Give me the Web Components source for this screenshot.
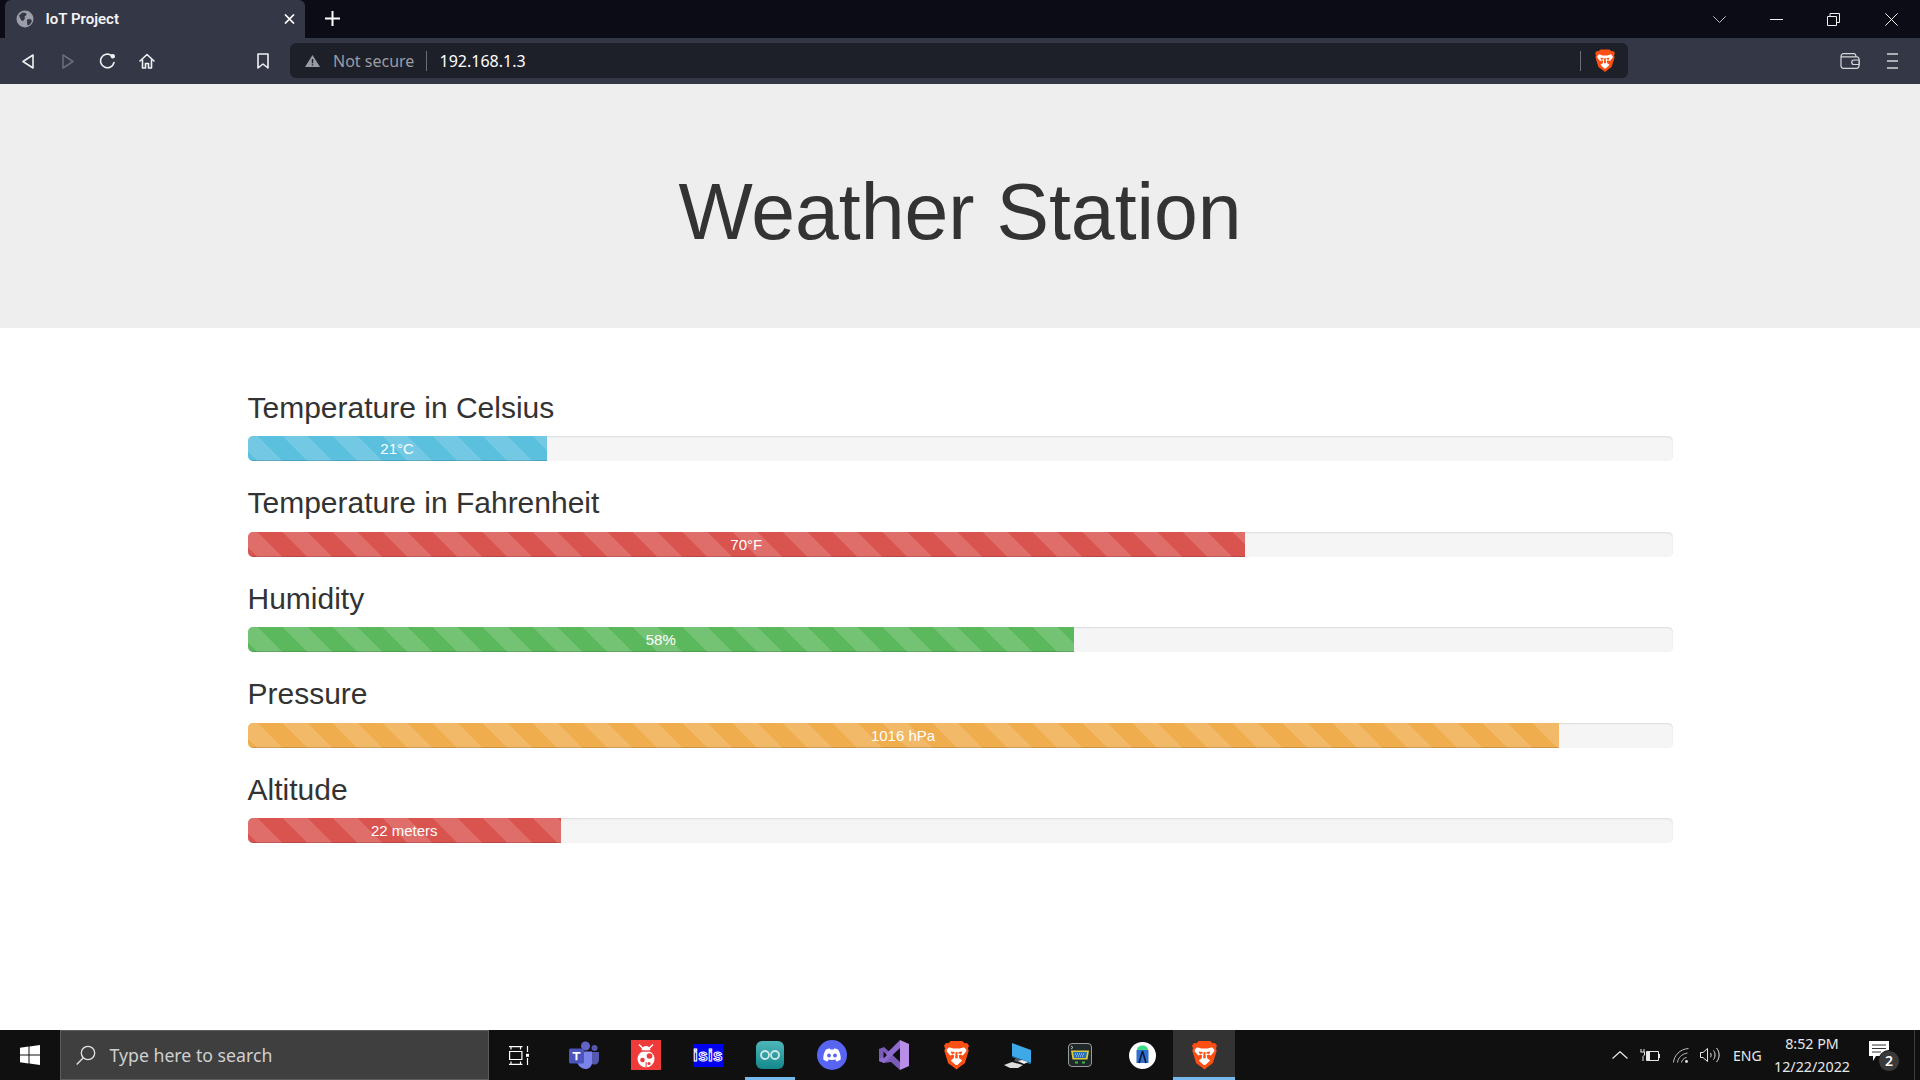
<!DOCTYPE html>
<html><head><meta charset="utf-8"><title>IoT Project</title>
<style>
html,body{margin:0;padding:0;height:100%;overflow:hidden;background:#fff}
body{font-family:"Liberation Sans",Arial,sans-serif}
</style></head><body>
<desktop-shell>
  <browser-tabs slot="tabs"></browser-tabs>
  <browser-toolbar slot="toolbar"></browser-toolbar>
  <weather-page slot="page">
    <weather-meter label="Temperature in Celsius" value="21°C" pct="21" color="#5bc0de"></weather-meter>
    <weather-meter label="Temperature in Fahrenheit" value="70°F" pct="70" color="#d9534f"></weather-meter>
    <weather-meter label="Humidity" value="58%" pct="58" color="#5cb85c"></weather-meter>
    <weather-meter label="Pressure" value="1016 hPa" pct="92" color="#f0ad4e"></weather-meter>
    <weather-meter label="Altitude" value="22 meters" pct="22" color="#d9534f"></weather-meter>
  </weather-page>
  <win-taskbar slot="taskbar"></win-taskbar>
</desktop-shell>
<script>
const LION=(w,h)=>`<svg width="${w}" height="${h}" viewBox="0 0 24 28"><path fill="#fb4f14" d="M6.500 .5h11l2.300 2.300 2.200-.4 2 2.600-1 2.500.7 2.500-3.700 12-5 3.500L12 28l-3-2.500-5-3.500L.3 10 1 7.500 0 5l2-2.600 2.200.4z"/><path fill="#fff" d="M4.800 6.500L9 7.800h6l4.200-1.300 2.300 2.400-.2 1.800-3.300 3.800-2.500-.9-1.300.9.500 2.700 2.800 2-1.800 1.800-2.900 2.700h-1.600l-2.900-2.700-1.800-1.800 2.800-2 .5-2.700-1.300-.9-2.500.9-3.300-3.800-.2-1.800z"/><path fill="#fb4f14" d="M6.300 10.600l3.700.5.300 1.500-2.900.5zM17.700 10.600l-3.700.5-.3 1.500 2.900.5zM11.200 11h1.600l.5 6.200h-2.600z"/></svg>`;
const def=(name,html)=>customElements.define(name,class extends HTMLElement{
  constructor(){super();this.attachShadow({mode:'open'}).innerHTML=typeof html==='function'?html(this):html;}
});

def('desktop-shell',`<style>
:host{display:flex;flex-direction:column;height:1080px;width:1920px;overflow:hidden}
.page{flex:1;min-height:0;overflow:hidden}
</style><slot name="tabs"></slot><slot name="toolbar"></slot><div class="page"><slot name="page"></slot></div><slot name="taskbar"></slot>`);

def('browser-tabs',`<style>
:host{display:flex;height:38px;background:#0b0c15;color:#fff;flex:none}
.tab{width:300px;margin-left:5px;background:#343746;border-radius:6px 6px 0 0;display:flex;align-items:center;box-sizing:border-box;padding-left:10.500px;position:relative}
.globe{margin-right:12px;display:block}
.t{font:600 15px "Roboto","Noto Sans",sans-serif;color:#f2f3f5}
.x{position:absolute;left:279px;top:14px}
.plus{margin-left:20px;margin-top:11px;display:block}
.right{margin-left:auto;display:flex;align-items:center;margin-right:22px}
.right svg{display:block}
</style>
<div class="tab">
<svg class="globe" width="18" height="18" viewBox="0 0 18 18"><circle cx="9" cy="9" r="8.500" fill="#9b9ea8"/><path fill="#343746" d="M3 5.500l3.500-3 3.500.5.500 2-2 1.500.5 2-2 2.500-1.500-.5-1.500-2.500zM11 9.500l3.500-.5 1.500 2-2 3.500-2.500 1L11 12z"/></svg>
<span class="t">IoT Project</span>
<svg class="x" width="11" height="10" viewBox="0 0 11 10"><path d="M1 .5l9 9M10 .5l-9 9" stroke="#fff" stroke-width="1.700" fill="none"/></svg>
</div>
<svg class="plus" width="15" height="15" viewBox="0 0 15 15"><path d="M7.500 0v15M0 7.500h15" stroke="#fff" stroke-width="2" fill="none"/></svg>
<div class="right">
<svg width="13" height="7" viewBox="0 0 13 7"><path d="M.3.300l6.200 6.200L12.700.300" stroke="#b9bac0" fill="none"/></svg>
<svg style="margin-left:44px" width="13" height="3" viewBox="0 0 13 3"><path d="M0 1.500h13" stroke="#eee" fill="none"/></svg>
<svg style="margin-left:44px" width="13" height="13" viewBox="0 0 13 13"><path d="M.5 3.500h9v9h-9zM3 3.500V.5h9.500v9H9.500" stroke="#eee" fill="none"/></svg>
<svg style="margin-left:45px" width="13" height="13" viewBox="0 0 13 13"><path d="M.3.300l12.400 12.400M12.700.300L.3 12.700" stroke="#eee" fill="none"/></svg>
</div>`);

def('browser-toolbar',()=>`<style>
:host{display:flex;align-items:center;height:46px;background:#343746;flex:none;color:#fff}
svg{display:block;flex:none}
.ic{fill:none;stroke:#f0f1f3;stroke-width:1.600;stroke-linejoin:round;stroke-linecap:round}
.url{width:1338px;height:35px;margin-left:21px;margin-top:-1px;background:#1e2029;border-radius:6px;display:flex;align-items:center;box-sizing:border-box;padding-left:15px;font:16px "Noto Sans","Open Sans",sans-serif}
.ns{color:#9a9ca5;margin-left:13px;width:93px;flex:none;white-space:nowrap}
.sep{width:1px;height:20px;background:#6b6d76;margin-right:12.500px;flex:none}
.ip{color:#fff}
.sep2{width:1px;height:20px;background:#6b6d76;margin-left:auto;margin-right:14px;flex:none}
.lion{margin-right:13px}
</style>
<svg style="margin-left:22px" class="ic" width="12" height="15" viewBox="0 0 12 15"><path d="M11 1v13L1 7.500z"/></svg>
<svg style="margin-left:28px" class="ic" width="12" height="15" viewBox="0 0 12 15"><path style="stroke:#6a6c77" d="M1 1v13L11 7.500z"/></svg>
<svg style="margin-left:25px" class="ic" width="17" height="16" viewBox="0 0 17 16"><path d="M15 9.500A6.800 6.800 0 1 1 12.500 2.500"/><circle cx="13.800" cy="3.300" r="2.200" fill="#f0f1f3" stroke="none"/></svg>
<svg style="margin-left:23px" class="ic" width="16" height="16" viewBox="0 0 16 16"><path d="M1 8l7-6.500L15 8M3.500 6.500V15h3v-4.500h3V15h3V6.500"/></svg>
<svg style="margin-left:102px" class="ic" width="12" height="16" viewBox="0 0 12 16"><path d="M1 1h10v14l-5-4-5 4z"/></svg>
<div class="url">
<svg width="15" height="12" viewBox="0 0 15 12"><path fill="#9a9ca5" d="M7.500 0L15 12H0z"/><path fill="#1e2029" d="M6.800 4h1.400v4.300H6.800zM6.800 9.200h1.400v1.400H6.800z"/></svg>
<span class="ns">Not secure</span><span class="sep"></span><span class="ip">192.168.1.3</span>
<span class="sep2"></span><span class="lion">${LION(20,23)}</span>
</div>
<svg style="margin-left:auto" width="20" height="16" viewBox="0 0 20 16"><path fill="none" stroke="#d6d7da" stroke-width="1.200" d="M1 3.500c0-1.500 1-2.800 2.500-2.800h10.500c1.200 0 1.800 1 2 3M1 3.500v9.300c0 1.300 1 2.500 2.500 2.500h13c1.300 0 2.500-1 2.500-2.500V6c0-1.300-1-2.200-2.300-2.200H1M19.300 7h-5.300a2 2 0 0 0 0 4.500h5.300z"/></svg>
<svg style="margin-left:27px;margin-right:22px" width="11" height="16" viewBox="0 0 11 16"><path d="M0 1h11M0 8h11M0 15h11" stroke="#d6d7da" stroke-width="1.600" fill="none"/></svg>`);

def('weather-page',`<style>
:host{display:block;color:#333}
.jumbo{background:#eee;height:244px;box-sizing:border-box;padding:85px 0 0;text-align:center}
h1{margin:0;font:400 78.750px/1.1 "Liberation Sans",Arial,sans-serif;color:#333}
.container{width:1425px;margin:0 auto;padding-top:37.500px}
</style><div class="jumbo"><h1>Weather Station</h1></div><div class="container"><slot></slot></div>`);

def('weather-meter',h=>{const a=n=>h.getAttribute(n);return `<style>
:host{display:block;padding-top:25px}
h3{margin:0 0 12.500px;font:400 30px/33px "Liberation Sans",Arial,sans-serif;color:#333}
.progress{height:25px;background:#f5f5f5;border-radius:5px;box-shadow:inset 0 1px 2px rgba(0,0,0,.1);overflow:hidden}
.bar{height:100%;width:${a('pct')}%;background-color:${a('color')};color:#fff;text-align:center;font:15px/25px "Liberation Sans",Arial,sans-serif;box-shadow:inset 0 -1px 0 rgba(0,0,0,.15);
background-image:linear-gradient(45deg,rgba(255,255,255,.15) 25%,transparent 25%,transparent 50%,rgba(255,255,255,.15) 50%,rgba(255,255,255,.15) 75%,transparent 75%,transparent);background-size:50px 50px;background-position:-15px 0}
</style><h3>${a('label')}</h3><div class="progress" role="progressbar"><div class="bar">${a('value')}</div></div>`});

def('win-taskbar',()=>`<style>
:host{display:flex;height:50px;background:#101010;flex:none;color:#fff;align-items:stretch;font-family:"Noto Sans","Open Sans",sans-serif;position:relative}
svg{display:block;flex:none}
.start{width:60px;display:flex;align-items:center;justify-content:center}
.search{width:429px;background:#3f3f3f;border:1px solid #5c5c5c;box-sizing:border-box;display:flex;align-items:center;padding-left:14.500px;color:#d0d0d0;font-size:17.700px}
.search span{margin-left:14px}
.apps{display:flex}
.a{width:62px;display:flex;align-items:center;justify-content:center;box-sizing:border-box;position:relative}
.on::after{content:"";position:absolute;left:6px;right:6px;bottom:0;height:3px;background:#76b9ed}
.act{background:#333}.act::after{left:0;right:0}
.tray{margin-left:auto;display:flex;align-items:center;color:#e8e8e8;margin-right:30px}
.eng{margin-left:13px;font-size:14px;width:29px;white-space:nowrap}
.clock{text-align:center;line-height:23px;font-size:14.300px;margin-left:10px;width:80px;white-space:nowrap}
.bell{position:relative;margin-left:17px;width:21px;height:21px;margin-top:-8px}
.badge{position:absolute;left:9px;top:9px;width:20px;height:20px;border-radius:50%;background:#3a3a3a;border:1px solid #111;font-size:14px;font-weight:600;line-height:20px;text-align:center;color:#fff}
.edge{position:absolute;right:5px;top:0;bottom:0;width:1px;background:#3c3c3c}
</style>
<div class="start"><svg width="20" height="20" viewBox="0 0 20 20"><path fill="#fff" d="M0 2.800l8.500-1.200v8H0zM9.500 1.400L20 0v9.600H9.500zM0 10.500h8.500v8L0 17.300zM9.500 10.500H20V20L9.500 18.600z"/></svg></div>
<div class="search"><svg width="20" height="20" viewBox="0 0 20 20"><circle cx="12" cy="8" r="6.700" fill="none" stroke="#e5e5e5" stroke-width="1.300"/><path d="M7.300 12.800L.7 19.500" stroke="#e5e5e5" stroke-width="1.300"/></svg><span>Type here to search</span></div>
<div class="apps">
<div class="a" style="width:64px;padding-right:4px"><svg width="20" height="19" viewBox="0 0 20 19"><path fill="none" stroke="#fff" stroke-width="1.200" d="M0 .6h13.500M2 .6v2.800M11.500.6v2.800M.6 5.500h12.300v8H.6zM0 18.400h13.500M2 15.600v2.800M11.500 15.600v2.800M18.500 0v6M18.500 12v7"/><rect x="17" y="7.800" width="3" height="3" fill="#fff"/></svg></div>
<div class="a"><svg width="30" height="28" viewBox="0 0 30 28"><circle cx="16.500" cy="5" r="4.500" fill="#6264c8"/><circle cx="25.500" cy="7" r="3" fill="#5558af"/><path fill="#5558af" d="M21 11h9v8c0 3-2.500 5-5 4.500-2 0-4-2-4-4z"/><path fill="#7b83eb" d="M8 10.500h15v11c0 4-3 6.500-6.500 6.500S9 25 8 21z"/><rect x="0" y="7.500" width="15" height="15" rx="1.500" fill="#4b53bc"/><path fill="#fff" d="M3.500 11h8v1.800H8.500v6.500h-2v-6.500h-3z"/></svg></div>
<div class="a"><svg width="30" height="30" viewBox="0 0 30 30"><rect width="30" height="30" fill="#ee3a38"/><circle cx="15" cy="19" r="8.500" fill="#fff"/><path fill="#fff" d="M10.500 10.500a4.500 4.500 0 0 1 9 0z"/><path d="M11.500 8L8 4.500M18.500 8L22 4.500" stroke="#fff" stroke-width="1.500"/><rect x="9" y="10.500" width="12" height="1.200" fill="#ee3a38"/><circle cx="18.500" cy="16" r="2.800" fill="#ee3a38"/><circle cx="11.500" cy="20" r="2.300" fill="#ee3a38"/><circle cx="18" cy="23.500" r="1.600" fill="#ee3a38"/><rect x="14.600" y="22" width="1" height="6" fill="#ee3a38"/></svg></div>
<div class="a"><svg width="30" height="23" viewBox="0 0 30 23"><rect width="30" height="23" fill="#0000f0"/><text x="15" y="17" text-anchor="middle" font-family="Liberation Sans,sans-serif" font-weight="700" font-size="17" fill="#0000f0" stroke="#fff" stroke-width="1" letter-spacing=".4">isis</text></svg></div>
<div class="a on"><svg width="28" height="28" viewBox="0 0 28 28"><defs><linearGradient id="ar" x1="0" y1="0" x2="0" y2="1"><stop offset="0" stop-color="#4fb6ba"/><stop offset="1" stop-color="#13888b"/></linearGradient></defs><rect width="28" height="28" rx="6" fill="url(#ar)"/><circle cx="9" cy="14" r="4" fill="none" stroke="#cfe8e8" stroke-width="1.800"/><circle cx="19" cy="14" r="4" fill="none" stroke="#cfe8e8" stroke-width="1.800"/></svg></div>
<div class="a"><svg width="30" height="30" viewBox="0 0 30 30"><circle cx="15" cy="15" r="15" fill="#5865f2"/><path fill="#fff" d="M9 9.500c2-.8 3-1 4-1l.5 1h3l.5-1c1 0 2 .2 4 1 2 3 3 6 2.700 10-1.500 1.200-3 1.700-4.200 2l-1-1.700-.1-.3c-2.200.6-4.600.6-6.800 0l-1.100 2c-1.200-.3-2.700-.8-4.200-2C6 15.500 7 12.500 9 9.500z"/><circle cx="12" cy="15.500" r="1.900" fill="#5865f2"/><circle cx="18" cy="15.500" r="1.900" fill="#5865f2"/></svg></div>
<div class="a"><svg width="30" height="30" viewBox="0 0 30 30"><path fill="#7a5bb8" d="M0 9l5-2 16 15v8l-9-8-7 1-5-2z"/><path fill="#8f6bd0" d="M21 0v8L5 23l-5-2v-1L12 9z"/><path fill="#b98ee8" d="M21 0l9 4v22l-9 4z"/><path fill="#101010" d="M4.500 11.500v7L8 15zM21 11l-5 4 5 4z"/></svg></div>
<div class="a">${LION(25,30)}</div>
<div class="a"><svg width="28" height="25" viewBox="0 0 28 25"><path fill="#3fa9e8" d="M8 0l19 7v13L8 13z"/><path fill="#1a7fbe" d="M8 13l19 7-1 1L8 14z"/><path fill="#555" d="M12 15l8 3-2 2-8-2z"/><path fill="#ddd" d="M0 22l8-3 11 3-5 3H6z"/><path fill="#eee" d="M14 18l4-1 6 2-4 2z"/></svg></div>
<div class="a"><svg width="24" height="24" viewBox="0 0 24 24"><rect x=".5" y=".5" width="23" height="23" rx="3.500" fill="#20282a" stroke="#9a9a9a"/><path d="M3 3l2 1.500L3 6" stroke="#ddd" fill="none" stroke-width=".8"/><path fill="#d9c93c" d="M3 7.500h18l-1.500 9h-15z"/><path fill="#2a6fb8" d="M5 9h14l-1 6H6z"/><path d="M7 11h10M8 13h8" stroke="#cde" stroke-dasharray="1 1"/><rect x="7" y="18.500" width="3" height="2" fill="#39b54a"/><rect x="14" y="18.500" width="3" height="2" fill="#39b54a"/></svg></div>
<div class="a"><svg width="27" height="27" viewBox="0 0 27 27"><circle cx="13.500" cy="13.500" r="13.500" fill="#fff"/><path fill="#3ddc84" d="M8 8c0-3 2.500-4.500 5.500-4.500S19 5 19 8z"/><rect x="7.500" y="8" width="12" height="13" fill="#2e6fd0"/><path d="M13.500 9l-3.500 12M13.500 9l3.500 12" stroke="#0b1a33" stroke-width="1.600"/></svg></div>
<div class="a on act">${LION(25,30)}</div>
</div>
<div class="tray">
<svg width="16" height="8" viewBox="0 0 16 8"><path d="M.5 7.500L8 .7l7.500 6.800" fill="none" stroke="#e8e8e8" stroke-width="1.200"/></svg>
<svg style="margin-left:12px" width="20" height="12" viewBox="0 0 20 12"><path d="M6.500 2.500h12v9h-12zM19.500 5v4" fill="none" stroke="#e8e8e8"/><path d="M7 3v8h3V3z" fill="#e8e8e8"/><path d="M1 0v3M4 0v3M.5 3h4v3L3 7.500v4.500" fill="none" stroke="#e8e8e8"/></svg>
<svg style="margin-left:13px" width="16" height="15" viewBox="0 0 16 15"><path d="M.5 14.500C1 7.500 7 1 15.500.5M4.500 14.500c.5-4.500 4-8.500 10-9.500M8.500 14.500c.3-2 2-4.500 5-5" fill="none" stroke="#bdbdbd"/><circle cx="13.500" cy="13.500" r="1.400" fill="#e8e8e8"/></svg>
<svg style="margin-left:11px" width="20" height="16" viewBox="0 0 20 16"><path d="M.5 5.500h2.500L7.500 1.500v13L3 10.500H.5zM10.500 6c.8 1.300.8 3 0 4.300M13.500 3.500c2 2.500 2 6.500 0 9M16.500 1c3.500 4 3.500 10 0 14" fill="none" stroke="#e8e8e8"/></svg>
<span class="eng">ENG</span>
<div class="clock">8:52 PM<br>12/22/2022</div>
<div class="bell"><svg width="20" height="20" viewBox="0 0 20 20"><path fill="#fff" d="M0 0h20v15H7l-3 5v-5H0z"/><path d="M3 4h14M3 7.500h14M3 11h9" stroke="#333" stroke-width="1"/></svg><span class="badge">2</span></div>
</div>
<div class="edge"></div>`);
</script></body></html>
